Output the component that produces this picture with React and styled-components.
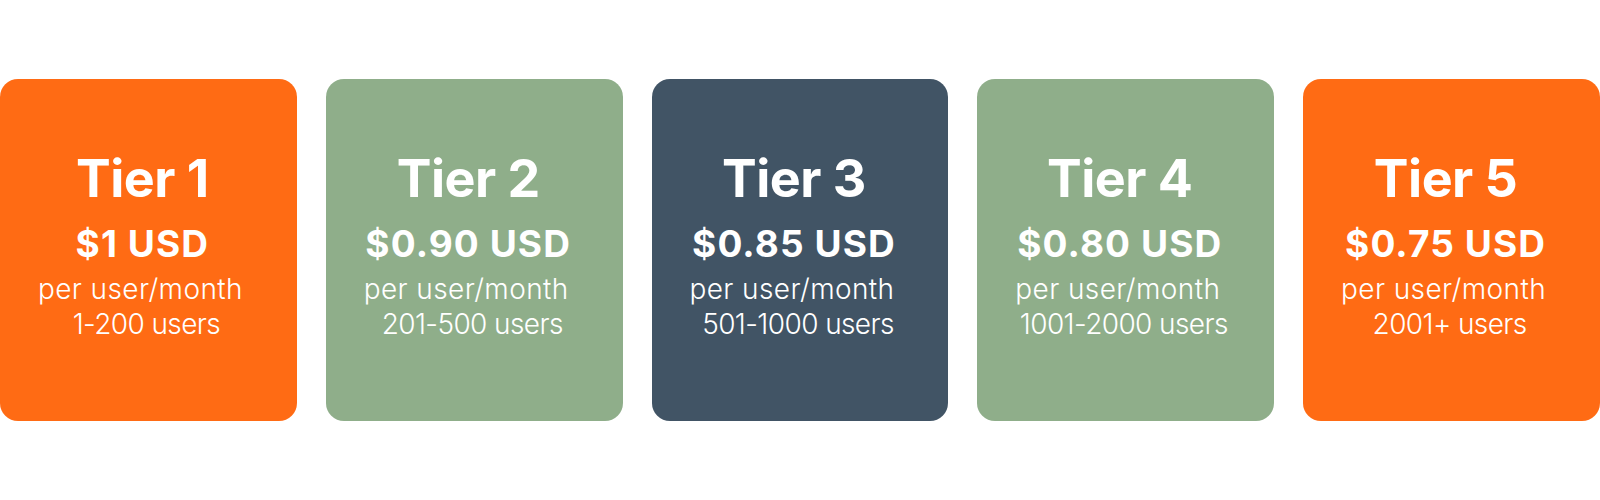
import React from "react";
import styled, { createGlobalStyle } from "styled-components";

const GlobalStyle = createGlobalStyle`
  html, body { margin: 0; padding: 0; background: #ffffff; }
  body { font-family: "Inter", "Liberation Sans", sans-serif; }
`;

const Page = styled.div`
  width: 1600px;
  height: 500px;
  display: flex;
  align-items: center;
`;

const Row = styled.div`
  display: flex;
  gap: 29px;
  width: 1600px;
  height: 342px;
`;

const Card = styled.div`
  flex: 1 1 0;
  min-width: 0;
  box-sizing: border-box;
  border-radius: 18px;
  background: ${(p) => p.$bg};
  color: #ffffff;
  display: flex;
  flex-direction: column;
  align-items: center;
  justify-content: center;
  text-align: center;
  padding-right: 12px;
  padding-bottom: 18px;
`;

const Title = styled.div`
  font-size: 52px;
  font-weight: 700;
  line-height: 75px;
  letter-spacing: -0.5px;
  white-space: nowrap;
`;

const Price = styled.div`
  font-size: 37px;
  font-weight: 700;
  line-height: 56px;
  letter-spacing: 1.1px;
  white-space: nowrap;
`;

const Line = styled.div`
  font-size: 28px;
  font-weight: 300;
  line-height: 35px;
  letter-spacing: ${(p) => p.$spacing}px;
  white-space: nowrap;
  margin-left: ${(p) => p.$shift || 0}px;
`;

const tiers = [
  { t: "Tier 1", p: "$1 USD", u: "1-200 users", bg: "#FF6B14" },
  { t: "Tier 2", p: "$0.90 USD", u: "201-500 users", bg: "#8FAE8A" },
  { t: "Tier 3", p: "$0.85 USD", u: "501-1000 users", bg: "#415465" },
  { t: "Tier 4", p: "$0.80 USD", u: "1001-2000 users", bg: "#8FAE8A" },
  { t: "Tier 5", p: "$0.75 USD", u: "2001+ users", bg: "#FF6B14" },
];

export default function App() {
  return (
    <>
      <GlobalStyle />
      <Page>
        <Row>
          {tiers.map((x) => (
            <Card key={x.t} $bg={x.bg}>
              <Title>{x.t}</Title>
              <Price>{x.p}</Price>
              <Line $shift={-4} $spacing={0.4}>per user/month</Line>
              <Line $shift={8} $spacing={-0.6}>{x.u}</Line>
            </Card>
          ))}
        </Row>
      </Page>
    </>
  );
}
